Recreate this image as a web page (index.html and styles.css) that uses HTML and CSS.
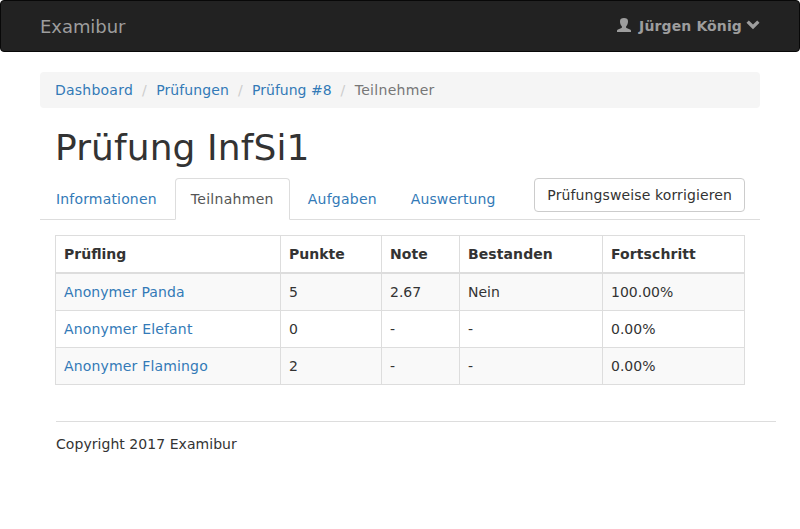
FILE: index.html
```html
<!DOCTYPE html>
<html lang="de">
<head>
<meta charset="utf-8">
<title>Examibur</title>
<link rel="stylesheet" href="styles.css">
</head>
<body>
<nav class="navbar">
  <a class="brand">Examibur</a>
  <div class="user">
    <svg class="icon-user" width="14" height="14" viewBox="0 0 14 14"><path d="M7 0C4.4 0 3 1 3 3.2C3 5.4 3.6 7 4.6 8C5.1 8.8 5.1 9.6 4.4 10L1 11.4C0.3 11.8 0 12.2 0 12.8V14H14V12.8C14 12.2 13.7 11.8 13 11.4L9.6 10C8.9 9.6 8.9 8.8 9.4 8C10.4 7 11 5.4 11 3.2C11 1 9.6 0 7 0Z"/></svg>
    <span class="user-name">Jürgen König</span>
    <svg class="icon-down" width="14" height="14" viewBox="0 0 14 14"><path d="M2.8 2.4L7 6.6L11.2 2.4L13.5 4.7L7 11.2L0.5 4.7Z"/></svg>
  </div>
</nav>
<main class="container">
  <ol class="breadcrumb">
    <li><a class="track-3">Dashboard</a></li>
    <li><a class="track-1">Prüfungen</a></li>
    <li><a>Prüfung #8</a></li>
    <li class="current"><span class="track-4">Teilnehmer</span></li>
  </ol>
  <h1>Prüfung InfSi1</h1>
  <div class="tabs">
    <a class="tab track-2">Informationen</a>
    <a class="tab active track-4">Teilnahmen</a>
    <a class="tab track-3">Aufgaben</a>
    <a class="tab track-1">Auswertung</a>
    <button class="button">Prüfungsweise korrigieren</button>
  </div>
  <table>
    <colgroup><col class="c-name"><col class="c-points"><col class="c-grade"><col class="c-passed"><col></colgroup>
    <thead><tr><th>Prüfling</th><th>Punkte</th><th class="track-1">Note</th><th class="track-1">Bestanden</th><th class="track-1">Fortschritt</th></tr></thead>
    <tbody>
      <tr><td><a class="track-1">Anonymer Panda</a></td><td>5</td><td>2.67</td><td>Nein</td><td>100.00%</td></tr>
      <tr><td><a class="track-2">Anonymer Elefant</a></td><td>0</td><td>-</td><td>-</td><td>0.00%</td></tr>
      <tr><td><a class="track-2">Anonymer Flamingo</a></td><td>2</td><td>-</td><td>-</td><td>0.00%</td></tr>
    </tbody>
  </table>
  <footer>Copyright 2017 Examibur</footer>
</main>
</body>
</html>
```
FILE: styles.css
```css
* { box-sizing: border-box; }
body {
  margin: 0;
  background: #fff;
  color: #333;
  font: 14px/20px "DejaVu Sans", sans-serif;
}
a { color: #337ab7; text-decoration: none; }
.track-1 { letter-spacing: 0.09px; }
.track-2 { letter-spacing: 0.17px; }
.track-3 { letter-spacing: 0.23px; }
.track-4 { letter-spacing: 0.3px; }
.navbar {
  display: flex;
  justify-content: space-between;
  align-items: center;
  height: 52px;
  padding: 0 40px;
  background: #222;
  border: 1px solid #080808;
  border-radius: 4px;
  color: #9d9d9d;
}
.navbar .brand { margin: 2px 0 0 -1px; color: #9d9d9d; font-size: 18px; letter-spacing: -0.06px; }
.user { display: flex; align-items: center; margin-right: -1px; font-weight: 700; }
.user svg { fill: currentColor; }
.user .icon-user { margin-bottom: 2px; }
.user .icon-down { margin-bottom: 2px; }
.user-name { margin: 0 4px 0 8px; letter-spacing: 0.12px; }
.container { width: 720px; margin: 20px auto 0; }
.breadcrumb {
  display: flex;
  margin: 0;
  padding: 8px 15px;
  list-style: none;
  background: #f5f5f5;
  border-radius: 4px;
}
.breadcrumb li + li::before { content: "/\00a0"; padding: 0 5px 0 9px; color: #ccc; }
.breadcrumb .current { color: #777; }
h1 { margin: 20px 15px 10px; font-size: 36px; font-weight: 400; line-height: 40px; letter-spacing: 0.1px; }
.tabs { display: flex; height: 42px; border-bottom: 1px solid #ddd; }
.tab {
  height: 42px;
  margin-right: 2px;
  padding: 10px 15px;
  border: 1px solid transparent;
  border-radius: 4px 4px 0 0;
}
.tab.active { background: #fff; border-color: #ddd #ddd #fff; color: #555; }
.button {
  height: 34px;
  margin: 0 15px 0 auto;
  padding: 6px 12px;
  background: #fff;
  border: 1px solid #ccc;
  border-radius: 4px;
  color: #333;
  font: inherit;
  letter-spacing: 0.12px;
}
table {
  width: 690px;
  margin: 15px 15px 0;
  border-collapse: collapse;
  table-layout: fixed;
}
.c-name { width: 225px; }
.c-points { width: 101px; }
.c-grade { width: 78px; }
.c-passed { width: 143px; }
th, td { padding: 8px; border: 1px solid #ddd; text-align: left; }
th { border-bottom-width: 2px; }
tbody tr:nth-child(odd) { background: #f9f9f9; }
footer {
  width: 720px;
  margin: 36px 0 0 16px;
  padding-top: 12px;
  border-top: 1px solid #ddd;
  letter-spacing: 0.05px;
}
```
